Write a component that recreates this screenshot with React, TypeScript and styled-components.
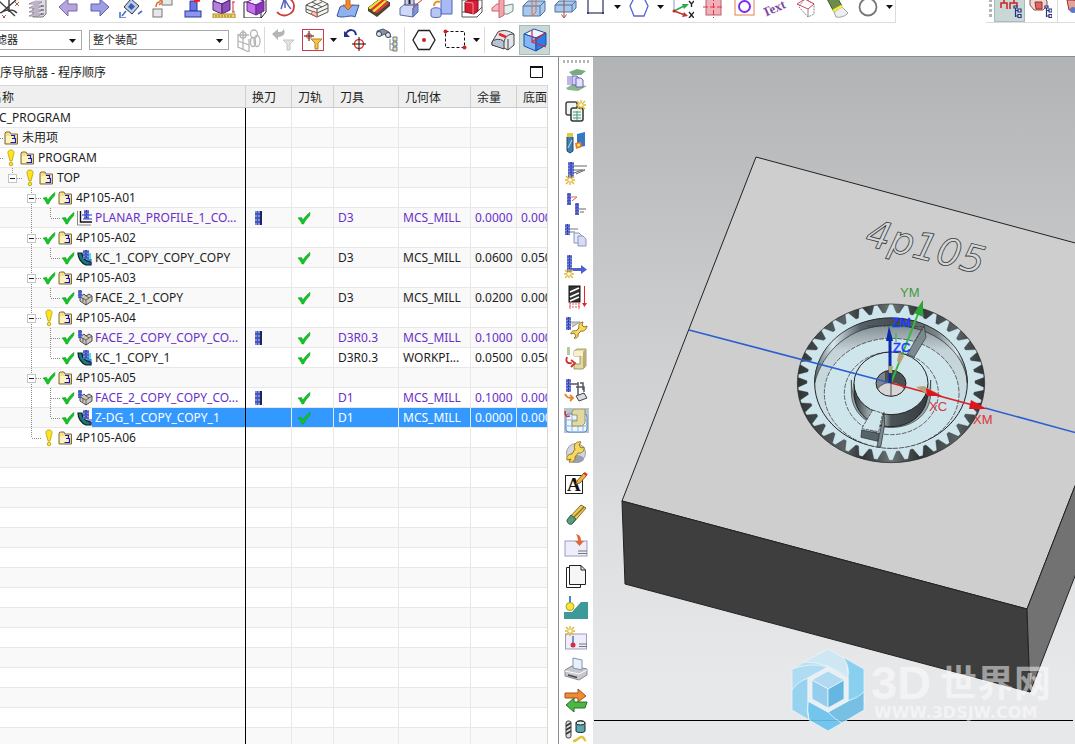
import React from "react";
import styled, { createGlobalStyle, css } from "styled-components";

const Global = createGlobalStyle`
  * { box-sizing: border-box; }
  html, body { margin: 0; padding: 0; background: #fff; overflow: hidden; }
  body { font-family: "Noto Sans", "Noto Sans CJK SC", sans-serif; font-size: 12px; color: #1e1e1e; }
  button, select { font-family: inherit; }
`;

/* ---------- layout ---------- */

const Shell = styled.div`
  display: flex;
  flex-direction: column;
  height: 100vh;
  overflow: hidden;
  background: #fff;
`;

const TopBar = styled.div`
  display: flex;
  gap: 90px;
  height: 23px;
  flex: none;
  overflow: hidden;
`;

const ToolStrip = styled.div<{ $grow?: boolean }>`
  display: flex;
  align-items: flex-end;
  overflow: hidden;
  border-bottom: 1px solid #dcdcdc;
  ${(p) =>
    p.$grow
      ? css`
          flex: 1 0 0;
          padding-left: 3px;
        `
      : css`
          border-right: 1px solid #dcdcdc;
          flex: none;
        `}
`;

const Scrolled = styled.div`
  display: flex;
  align-items: flex-end;
  margin-left: -9px;
`;

const ToolButton = styled.button<{ $active?: boolean; $w?: number; $h?: number }>`
  display: flex;
  flex: none;
  align-items: center;
  justify-content: center;
  width: ${(p) => p.$w ?? 31}px;
  height: ${(p) => p.$h ?? 32}px;
  padding: 0;
  border: 1px solid ${(p) => (p.$active ? "#a3bdbb" : "transparent")};
  background: ${(p) => (p.$active ? "#c9d8d7" : "transparent")};
`;

const DropButton = styled.button`
  display: flex;
  flex: none;
  align-items: center;
  justify-content: center;
  width: 12px;
  height: 30px;
  padding: 0;
  border: 0;
  background: transparent;
`;

const FilterBar = styled.div`
  display: flex;
  align-items: center;
  height: 34px;
  flex: none;
  overflow: hidden;
  border-bottom: 1px solid #868d94;
`;

const Combo = styled.div<{ $w: number }>`
  position: relative;
  display: flex;
  flex: none;
  width: ${(p) => p.$w}px;
  margin-right: 7px;
  svg { position: absolute; right: 6px; top: 9px; pointer-events: none; }
  select {
    width: 100%;
    height: 20px;
    padding: 0 18px 0 3px;
    appearance: none;
    border: 1px solid #a8a8a8;
    border-radius: 0;
    background: #fff;
    color: #1e1e1e;
    font-size: 11px;
  }
`;

const ComboClip = styled.div`
  display: flex;
  margin-left: -52px;
`;

const Divider = styled.span`
  flex: none;
  width: 1px;
  height: 26px;
  margin: 0 2px;
  background: #d9d9d9;
`;

const Grip = styled.span`
  flex: none;
  width: 3px;
  height: 20px;
  margin: 0 2px 3px 0;
  background: repeating-linear-gradient(#b4b4b4 0 3px, #fff 3px 5px);
`;

const Work = styled.div`
  display: flex;
  flex: 1;
  min-height: 0;
`;

const Navigator = styled.section`
  display: flex;
  flex-direction: column;
  flex: 0 0 52%;
  min-width: 0;
  padding-right: 10px;
  overflow: hidden;
  border-right: 1px solid #868d94;
`;

const TitleBar = styled.header`
  display: flex;
  align-items: center;
  justify-content: space-between;
  flex: none;
  height: 28px;
  padding: 2px 5px 0 0;
`;

const Title = styled.h1`
  margin: 0 0 0 -12px;
  font-size: 12px;
  font-weight: 400;
  white-space: nowrap;
`;

const WindowButton = styled.button`
  display: flex;
  padding: 0;
  border: 0;
  background: transparent;
`;

const TableFrame = styled.div`
  flex: 1;
  min-height: 0;
  overflow: hidden;
  border-top: 1px solid #d8d8d8;
  border-right: 1px solid #d8d8d8;
`;

const Table = styled.table`
  width: 100%;
  table-layout: fixed;
  border-collapse: separate;
  border-spacing: 0;
`;

const Head = styled.th`
  height: 22px;
  padding: 0 0 0 6px;
  overflow: hidden;
  border-right: 1px solid #cfcfcf;
  border-bottom: 1px solid #cacaca;
  background: #efefef;
  font-weight: 400;
  text-align: left;
  white-space: nowrap;
  &:first-child { padding: 0; }
  &:last-child { border-right: 0; }
`;

const HeadText = styled.span`
  display: block;
  margin-left: -10px;
`;

const Cell = styled.td`
  height: 20px;
  padding: 0 0 1px 4px;
  overflow: hidden;
  border-right: 1px solid #e8e8e8;
  box-shadow: inset 0 -1px #e8e8e8;
  line-height: 19px;
  white-space: nowrap;
  svg { display: block; }
  &:first-child { padding: 0 0 1px; border-right-color: #000; }
  &:last-child { border-right: 0; }
`;

const Row = styled.tr<{ $purple?: boolean; $selected?: boolean }>`
  color: ${(p) => (p.$selected ? "#fff" : p.$purple ? "#6a2fc8" : "#1e1e1e")};
  &:nth-child(even) { background: #f9f9f9; }
  ${(p) =>
    p.$selected &&
    css`
      ${Cell}:not(:first-child) { background: #3399ff; }
    `}
`;

const TreeLine = styled.div<{ $root?: boolean }>`
  display: flex;
  align-items: stretch;
  height: 19px;
  margin-left: ${(p) => (p.$root ? -13 : -14)}px;
`;

const Slot = styled.span<{ $w: number }>`
  flex: none;
  width: ${(p) => p.$w}px;
`;

const Label = styled.span<{ $selected?: boolean }>`
  flex: 1;
  padding-left: 3px;
  background: ${(p) => (p.$selected ? "#3399ff" : "transparent")};
`;

const CellIcon = styled.span<{ $pad: number }>`
  display: block;
  padding-left: ${(p) => p.$pad}px;
`;

const SideBar = styled.nav`
  display: flex;
  flex-direction: column;
  align-items: center;
  flex: 0 0 34px;
  overflow: hidden;
`;

const SideGrip = styled.span`
  flex: none;
  width: 27px;
  height: 3px;
  margin: 3px 0 1px;
  background: repeating-linear-gradient(90deg, #b4b4b4 0 2px, #fff 2px 4px);
`;

const SideItem = styled.button<{ $active?: boolean }>`
  display: flex;
  flex: none;
  align-items: center;
  justify-content: center;
  width: 25px;
  height: 25px;
  margin: 3px 0;
  padding: 0;
  border: 0;
  background: ${(p) => (p.$active ? "#b9c3cd" : "transparent")};
`;

const Viewport = styled.main`
  flex: 1;
  min-width: 0;
  overflow: hidden;
  background: linear-gradient(#b2b3b5 0%, #c9cacc 35%, #dddee0 68%, #e7e8ea 90%);
  svg { display: block; width: 100%; height: 100%; }
`;

/* ---------- small glyphs ---------- */

const Arrow = () => (
  <svg width="7" height="4" viewBox="0 0 7 4">
    <path d="M0 0H7L3.500 4Z" fill="#111" />
  </svg>
);

const Ico = ({ children, size = 24 }: { children: React.ReactNode; size?: number }) => (
  <svg width={size} height={size} viewBox="0 0 24 24" fill="none">
    {children}
  </svg>
);

const Mill = ({ x, y, w = 5, h = 13 }: { x: number; y: number; w?: number; h?: number }) => (
  <g>
    <rect x={x} y={y} width={w} height={h} fill="#5464cc" />
    <path
      d={`M${x + 1} ${y}v${h}M${x + w - 1} ${y}v${h}`}
      stroke="#a9b8f4"
      strokeWidth="1"
      strokeDasharray="1 2"
    />
    <path d={`M${x + w / 2} ${y}v${h}`} stroke="#2c3a96" strokeWidth="1" strokeDasharray="2 1" />
  </g>
);

const Spark = ({ x, y }: { x: number; y: number }) => (
  <g stroke="#e0b73a" strokeWidth="1.400">
    <path d={`M${x - 5} ${y}h10M${x} ${y - 5}v10M${x - 4} ${y - 4}l8 8M${x + 4} ${y - 4}l-8 8`} />
    <circle cx={x} cy={y} r="1.800" fill="#fffbe0" stroke="none" />
  </g>
);

const Wrench = ({ x = 0, y = 0 }: { x?: number; y?: number }) => (
  <g transform={`translate(${x} ${y})`}>
    <path
      d="M1 13C1 10 4 9 6 10L9 7C8 4 10 1 13 1L12 4L14 6L17 5C17 8 14 11 11 10L8 13C9 16 6 18 4 17L6 15L4 12Z"
      fill="#f7d75f"
      stroke="#96771d"
    />
  </g>
);

const Machine = ({ x = 0, y = 0 }: { x?: number; y?: number }) => (
  <g transform={`translate(${x} ${y})`}>
    <path d="M1 2L4 0H13V17L10 20H1V15H7V7H1Z" fill="#e2d8a0" stroke="#8c8558" strokeWidth=".8" />
    <path d="M10 3L13 0V17L10 20Z" fill="#b9ad70" />
    <path d="M1 2H10V7H1Z" fill="#f6f1c9" />
  </g>
);

const Cube = ({ x, y, fill, line, dark }: { x: number; y: number; fill: string; line: string; dark: string }) => (
  <g transform={`translate(${x} ${y})`} stroke={line} strokeWidth="1">
    <path d="M0 4L8 0L17 3L9 7Z" fill="#f4edff" />
    <path d="M0 4L9 7V17L0 13Z" fill={fill} />
    <path d="M9 7L17 3V13L9 17Z" fill={dark} />
  </g>
);

const TreeMark = ({ x, y }: { x: number; y: number }) => (
  <g transform={`translate(${x} ${y})`} stroke="#27337d" strokeWidth="1.200" fill="#e9ecff">
    <path d="M1.500 0V11M1.500 4.500H5M1.500 10H5" />
    <path d="M4 3h3v3H4zM4 8.500h3v3H4zM0 0h3v2H0z" />
  </g>
);

/* ---------- toolbar drawings ---------- */

const topIcons: Record<string, React.ReactNode> = {
  Trim: (
    <>
      <path d="M3 6L20 22M21 6L6 19M14 4V18M5 19C12 15 18 15 22 19" stroke="#3a3a3a" strokeWidth="1.400" />
      <path d="M20 8l4 4m0-4l-4 4M7 21l4 4m0-4l-4 4" stroke="#c0533f" />
    </>
  ),
  Layers: (
    <>
      <path d="M9 5H20V20L17 23H7V12" fill="#dedce3" stroke="#77747d" />
      <path d="M3 10L7 8H16L12 10ZM3 14L7 12H16L12 14ZM3 18L7 16H16L12 18ZM3 22L7 20H16L12 22Z" fill="#e6dcee" stroke="#85778f" strokeWidth=".8" />
      <path d="M15 12h3m-3 4h3m-3 4h3" stroke="#444" />
    </>
  ),
  Back: <path d="M2 13L11 5V10H20V17H11V22Z" fill="#b6a4dc" stroke="#7a68ad" />,
  Forward: <path d="M21 13L12 5V10H3V17H12V22Z" fill="#9c9fe4" stroke="#5f61ae" />,
  Rotate: (
    <>
      <path d="M12 5L20 12L13 20L5 13Z" fill="#b9cdf2" stroke="#333" />
      <path d="M12 9L16 12.500L12.500 16L9 13Z" fill="#3b5fa8" />
      <path d="M1 18V24H7M3 22L7 17M17 5L21 2M19 20L23 17" stroke="#4a73c8" strokeWidth="1.600" />
    </>
  ),
  Move: (
    <>
      <rect x="12" y="4" width="10" height="7" fill="#e8e8e8" stroke="#777" />
      <rect x="3" y="15" width="9" height="8" fill="#e8e8e8" stroke="#777" />
      <path d="M6 13C6 9 8 8 10 8M9 5L12 8L9 11" stroke="#e26a2c" strokeWidth="1.500" />
    </>
  ),
  Block: (
    <>
      <path d="M9 7H16V17H9Z" fill="#6a74e4" stroke="#2d3799" />
      <rect x="4" y="17" width="16" height="6" fill="#8b96f2" stroke="#2d3799" />
      <path d="M13 7L19 6" stroke="#e22" strokeWidth="3" />
    </>
  ),
  Measure: (
    <>
      <Cube x={1} y={3} fill="#b780da" dark="#8c4fb8" line="#4f2570" />
      <rect x="1" y="20" width="22" height="4" fill="#f2d674" stroke="#a98b2c" />
      <path d="M4 21v2m3-2v2m3-2v2m3-2v2m3-2v2m3-2v2" stroke="#8b7220" />
      <path d="M21 8v10m-1-10h3m-3 10h3" stroke="#c33" />
    </>
  ),
  Bounding: (
    <>
      <path d="M1 8V24H18L23 18V4M18 24V8H1" stroke="#222" />
      <Cube x={4} y={4} fill="#c672ec" dark="#8a36b8" line="#6a2691" />
    </>
  ),
  Curve: (
    <>
      <path d="M3 18C8 24 20 22 20 12C20 8 17 5 15 5" stroke="#cf3d3d" strokeWidth="1.800" />
      <path d="M7 15C9 9 10 6 11 3V14M11 6C13 9 14 12 17 15" stroke="#5b62c0" strokeWidth="1.500" />
    </>
  ),
  Mesh: (
    <>
      <path d="M1 11L13 5L23 10L12 15ZM1 11V18L12 23L23 18V10M12 15V23M7 8L17 13M6 13L17 8M1 15L12 19L23 14" fill="#f6f2ee" stroke="#555" />
      <path d="M6 20L12 23V19L8 17Z" fill="#f3c9bc" stroke="#b35b48" />
    </>
  ),
  Surface: (
    <>
      <path d="M4 13C8 10 10 14 14 12S20 12 23 11L19 23C14 20 8 25 1 22Z" fill="#8fb2f0" stroke="#36559c" />
      <path d="M10 4H14V11H17L12 16L7 11H10Z" fill="#ee8b33" stroke="#a75418" strokeWidth=".8" />
    </>
  ),
  Strip: (
    <>
      <path d="M1 14L14 4L23 9L10 20Z" fill="#d93a3a" stroke="#333" />
      <path d="M1 14L14 4L16 5L3 15.500ZM5 17L18 6L20 7L7 18.500Z" fill="#f7e22b" />
      <path d="M1 14V17L10 23L23 12V9L10 20Z" fill="#4a4533" />
    </>
  ),
  Extract: (
    <>
      <path d="M2 14L7 10H20L15 14V23L2 21Z" fill="#cfd9f5" stroke="#5a6ca8" />
      <path d="M15 14L20 10V18L15 23Z" fill="#7f93d6" stroke="#5a6ca8" />
      <rect x="7" y="3" width="9" height="8" fill="#c8cde8" stroke="#39477e" />
      <path d="M11.500 5V10" stroke="#222" strokeWidth="2" />
      <path d="M24 6L15 13" stroke="#d33" />
    </>
  ),
  Pattern: (
    <>
      <path d="M12 4H23V20H12Z" fill="#a9bbf4" stroke="#5265b4" />
      <path d="M2 16C2 13 12 13 12 16V22C12 24 2 24 2 22Z" fill="#b7c7f8" stroke="#5265b4" />
      <path d="M5 12C5 8 8 7 11 8" stroke="#e69a2c" strokeWidth="2" />
    </>
  ),
  Solid: (
    <>
      <path d="M2 6H22V18L17 23H2ZM2 18H17V6M17 18L22 13" stroke="#555" />
      <path d="M5 8L10 6H18V17L14 20L5 18Z" fill="#d41f35" stroke="#84101e" />
      <path d="M5 8L13 9V20" stroke="#ff8d99" />
    </>
  ),
  Split: (
    <>
      <path d="M1 14L6 10H12V17H1Z" fill="#f6b9c0" stroke="#c96673" />
      <path d="M12 12L22 10V17L17 20H12Z" fill="#e5f1ec" stroke="#70937f" />
      <path d="M8 6L13 4V21L8 24Z" fill="#f3a5ae" stroke="#c96673" />
    </>
  ),
  Section: (
    <>
      <path d="M1 12L6 7H23V17L18 22H1Z" fill="#a8c8ec" stroke="#50729e" />
      <path d="M1 12H18V22M18 12L23 7" stroke="#50729e" />
      <path d="M10 6L14 4V18L10 22Z" stroke="#dd7044" />
    </>
  ),
  Offset: (
    <>
      <path d="M2 11L6 7H23V14L19 18H2Z" fill="#a8c8ec" stroke="#50729e" />
      <path d="M2 11H19V18M19 11L23 7" stroke="#50729e" />
      <path d="M11 5V23M8.500 20.500L11 24L13.500 20.500" stroke="#a4553b" />
    </>
  ),
};

const lateIcons: Record<string, React.ReactNode> = {
  Axes: (
    <>
      <path d="M4 3V17" stroke="#8c93d6" />
      <path d="M4 17L14 12" stroke="#2ca84a" strokeWidth="1.500" />
      <path d="M12 10L19 10L14 15Z" fill="#2ca84a" />
      <path d="M4 17L15 21" stroke="#c0392b" strokeWidth="1.500" />
      <path d="M14 18L18 22L12 23Z" fill="#c0392b" />
      <circle cx="4" cy="17" r="1.500" fill="#c22" />
      <path d="M19 7L21.500 10L24 7M21.500 10V13M19 18L24 24M24 18L19 24" stroke="#222" strokeWidth="1.400" />
    </>
  ),
  Hatch: (
    <>
      <rect x="5" y="4" width="15" height="17" fill="#efb0bb" stroke="#b5606e" />
      <path d="M12.500 2V24M2 13H23" stroke="#e33" strokeDasharray="5 2" />
    </>
  ),
  Circle: (
    <>
      <rect x="3" y="3" width="19" height="18" stroke="#e4814a" />
      <circle cx="12.500" cy="12.500" r="5.500" stroke="#7b2df0" strokeWidth="2" />
    </>
  ),
  Text: (
    <text x="1" y="23" fontFamily="Liberation Serif" fontSize="13" fontWeight="700" fill="#7d4a9e" transform="rotate(-24 2 22)">
      Text
    </text>
  ),
  Draft: (
    <>
      <path d="M5 12L11 5L20 10V20L14 23L5 13Z" stroke="#888" strokeDasharray="2 1" />
      <path d="M3 10L14 15L20 10M3 10L11 5L20 10" stroke="#d46" />
      <path d="M14 15V23" stroke="#888" />
    </>
  ),
  Light: (
    <>
      <path d="M1 3H12L17 12L9 18Z" fill="#6d8b4b" stroke="#43562d" />
      <path d="M9 18L17 13L23 19C21 22 15 24 11 23Z" fill="#eceef0" stroke="#9ea2a6" />
      <path d="M8 17L17 12" stroke="#f3e648" strokeWidth="3" />
    </>
  ),
  Ring: <circle cx="12" cy="13" r="8.500" stroke="#777" strokeWidth="1.800" />,
};

const filterIcons: Record<string, React.ReactNode> = {
  chain: (
    <g stroke="#b4b4b4" strokeWidth="1.300">
      <path d="M1 6V19L12 24V17L1 13M12 17V11M6 2V22M1 7H12" />
      <circle cx="6" cy="7" r="3" />
      <ellipse cx="17" cy="6" rx="3.500" ry="4" />
      <ellipse cx="20" cy="13" rx="3" ry="5.500" />
      <ellipse cx="16" cy="14" rx="2.500" ry="4.500" />
    </g>
  ),
  undoFilter: (
    <>
      <path d="M1 6L7 1V4C12 4 13 2 12 0C16 5 12 9 7 9V12Z" fill="#b5b5b5" />
      <path d="M12 12H23L19 16V22H16V16Z" fill="#e3e3e3" stroke="#c4c4c4" />
    </>
  ),
  pickFilter: (
    <>
      <rect x="1.500" y="1.500" width="21" height="21" stroke="#cc3d4b" />
      <path d="M8 3V13M3 8H13" stroke="#111" />
      <circle cx="8" cy="8" r="2.500" stroke="#d33" />
      <path d="M10 11H21L17 15V21H14V15Z" fill="#f7c64c" stroke="#b98213" />
    </>
  ),
  target: (
    <>
      <path d="M2 7C6 0 12 1 13 7" stroke="#27307c" strokeWidth="2" />
      <path d="M1 3V9H7Z" fill="#27307c" />
      <circle cx="16" cy="16" r="4.500" stroke="#e33" strokeWidth="1.500" />
      <path d="M16 9V23M9 16H23" stroke="#111" />
    </>
  ),
  find: (
    <>
      <path d="M2 3L8 1L14 4L16 9L12 9L10 6L5 8L2 6Z" fill="#8492a8" stroke="#4b5664" />
      <circle cx="4" cy="6" r="2.500" fill="#dfe6ef" stroke="#39434f" />
      <circle cx="13" cy="7" r="2.500" fill="#dfe6ef" stroke="#39434f" />
      <path d="M15 11V22H18M15 16H18" stroke="#888" />
      <path d="M18 9h4v4h-4zM18 14h4v4h-4zM18 19h4v4h-4z" fill="#f4e67a" stroke="#3b5bb0" strokeWidth=".8" />
    </>
  ),
  hex: (
    <>
      <path d="M6.500 2.500H17.500L23 12L17.500 21.500H6.500L1 12Z" stroke="#222" strokeWidth="1.300" />
      <circle cx="12" cy="12" r="2" fill="#c22" />
    </>
  ),
  marquee: (
    <>
      <rect x="2.500" y="3.500" width="19" height="16" stroke="#111" strokeDasharray="3 2" />
      <circle cx="2.500" cy="3.500" r="2" fill="#c22" />
      <circle cx="21.500" cy="19.500" r="2" fill="#c22" />
    </>
  ),
  hood: (
    <>
      <path d="M7 4C12 1 19 3 23 6V17L17 22L13 20L1 17V14Z" fill="#e3e5ea" stroke="#444" />
      <path d="M1 14C4 10 12 11 13 14V21L1 17Z" fill="#b9c3d6" stroke="#444" />
      <path d="M13 14C14 9 17 6 23 6M17 22V11" stroke="#444" />
      <path d="M8 6L15 9" stroke="#e22" strokeWidth="2.500" />
    </>
  ),
  shaded: (
    <>
      <path d="M1 6L11 1L23 5L13 10Z" fill="#eef5ff" stroke="#1d4da8" />
      <path d="M1 6L13 10V23L1 18Z" fill="#7fb8f8" stroke="#1d4da8" />
      <path d="M13 10L23 5V17L13 23Z" fill="#2b7de8" stroke="#1d4da8" />
      <path d="M9 2V14L23 19M9 14L22 5" stroke="#e0243a" strokeWidth="1.200" />
    </>
  ),
};

const sideIcons: [string, React.ReactNode][] = [
  ["Program", <><path d="M5 4L13 1L22 3L17 7L8 7Z" fill="#79a97e" /><path d="M2 20L9 16L23 18L14 23L4 22Z" fill="#8ab98d" /><path d="M4 8V17M6 8V17" stroke="#7c6bd0" /><path d="M8 8H13L15 10V17H8Z" fill="#cfd0f6" stroke="#6b62b8" /><path d="M12 10H17L19 12V19H12Z" fill="#e3e4fc" stroke="#6b62b8" /></>],
  ["Create geometry", <><rect x="2" y="3" width="11" height="13" rx="2" fill="#f3f3f3" stroke="#444" strokeWidth="1.500" /><rect x="7" y="9" width="12" height="13" rx="2" fill="#eef8f2" stroke="#333" strokeWidth="1.500" /><path d="M9 13h8m-8 3h8m-8 3h8M13 12v9" stroke="#4c9a80" /><Spark x={17} y={6} /></>],
  ["Create tool", <><path d="M3 7L6 5L9 7V21L6 23L3 21Z" fill="#3e7fae" stroke="#1f4a6b" /><path d="M4 18L8 10" stroke="#bfe2f6" /><rect x="3" y="3" width="6" height="4" fill="#e6c93b" /><path d="M13 4L21 2V16L13 18Z" fill="#3678c4" /><path d="M11 13L17 12L18 17L12 19Z" fill="#ee7a2c" /><circle cx="14.500" cy="15" r="1.500" fill="#fff04f" /></>],
  ["Create operation", <><Mill x={4} y={1} w={6} h={16} /><path d="M10 5H23M10 9H21L12 13M10 12L18 9" stroke="#666" /><Spark x={6} y={19} /></>],
  ["Cut levels", <><Mill x={3} y={1} w={4} h={12} /><Mill x={11} y={11} w={4} h={12} /><path d="M7 5H13L8 9" stroke="#d66" /><path d="M15 17H22M16 20H20" stroke="#666" /></>],
  ["Copy operation", <><Mill x={1} y={1} w={5} h={11} /><path d="M6 6H14M6 9H11" stroke="#777" /><path d="M10 10H15L18 13V20H10Z" fill="#e6e9f8" stroke="#8c94bf" /><path d="M14 13H19L22 16V23H14Z" fill="#d7dcf3" stroke="#8c94bf" /></>],
  ["Transform", <><Mill x={3} y={1} w={5} h={17} /><path d="M8 14H17V11L23 15.500L17 20V17H8Z" fill="#4d5fd1" /><Spark x={5} y={20} /></>],
  ["Tool path depth", <><rect x="5" y="1" width="11" height="16" fill="#333" stroke="#111" /><path d="M6 7L15 3M6 12L15 8M6 16L15 12" stroke="#fff" strokeWidth="1.800" /><path d="M5 19H16M5 22H16M6 17V24M15 17V24" stroke="#e55" strokeDasharray="2 1" /><path d="M20.500 1V20" stroke="#e22" /><path d="M18 18H23L20.500 22Z" fill="#e22" /></>],
  ["Edit operation", <><Mill x={2} y={1} w={5} h={13} /><path d="M7 6H16L8 11" stroke="#999" fill="#ccc" /><Wrench x={6} y={5} /></>],
  ["Machine code", <><Machine x={9} y={2} /><rect x="3" y="0" width="3" height="8" fill="#b8c9a2" /><path d="M3 10C1 15 4 17 8 16M7 13L11 16L7 20" stroke="#cc3333" strokeWidth="1.800" /></>],
  ["Simulate", <><Mill x={2} y={1} w={5} h={13} /><path d="M7 6H14M14 4V19H22M12 9H20V14M16 5H19V12" stroke="#556" strokeWidth="1.500" /><path d="M12 18L20 15L23 20L15 23Z" fill="#d7dbe4" stroke="#444" /><path d="M1 16C3 20 5 20 8 20M6 17L9 20L6 23" stroke="#e6872a" strokeWidth="1.800" /></>],
  ["Post process", <><rect x="2" y="5" width="21" height="18" rx="3" fill="#eef6ff" stroke="#4a86c8" /><path d="M3 11H22M3 17H22M8 6V22M14 6V22M19 6V22" stroke="#8ab6e4" /><path d="M8 2L11 0H21V14L18 17H8V12H13V6H8Z" fill="#e2d8a0" stroke="#8c8558" strokeWidth=".8" /><path d="M1 2C1 8 3 8 6 7" stroke="#c33" strokeWidth="1.500" /></>],
  ["Machine setup", <><circle cx="12" cy="13" r="9.500" fill="#d3d8dc" stroke="#9a9ea3" /><ellipse cx="12" cy="19" rx="8" ry="4" fill="#9aa0a7" /><path d="M3 20C2 16 5 14 8 14L11 9C9 5 12 1 17 2L15 5L17 8L20 7C21 11 17 14 14 13L11 17C12 20 8 23 5 22L7 19Z" fill="#f7d75f" stroke="#96771d" /></>],
  ["Annotation", <><rect x="1.500" y="4.500" width="17" height="18" fill="#fff" stroke="#222" /><text x="3" y="20" fontFamily="Liberation Serif" fontSize="19" fontWeight="700" fill="#111">A</text><path d="M13 10L20 2L23 4L16 12L12 13Z" fill="#f0b545" stroke="#925e17" /><path d="M20 2L23 4" stroke="#d33" strokeWidth="2.500" /></>],
  ["Edit display", <><path d="M4 17L17 3L22 6L9 21Z" fill="#f0ce58" stroke="#826322" /><path d="M7 18L20 5" stroke="#8a7430" strokeWidth="1.500" /><path d="M3 18L7 13L12 17L8 22C5 23 3 21 3 18Z" fill="#5a9d7b" stroke="#2f5c46" /></>],
  ["Sheet", <><rect x="1" y="8" width="22" height="15" fill="#eeeefa" stroke="#9c9cc4" /><path d="M14 18H23M14 20.500H23" stroke="#777" /><path d="M12 1C16 2 17 4 17 8H20L15.500 13L11 8H14C14 5 13 3 12 1Z" fill="#e2683a" /></>],
  ["Pages", <><path d="M5 3.500H2.500V23.500H16.500V21" stroke="#222" /><path d="M5.500 1.500H17L21.500 6V20.500H5.500Z" fill="#f6f6f6" stroke="#222" /><path d="M17 1.500V6H21.500" stroke="#222" /></>],
  ["Probe", <><path d="M0 24V17H8L17 7H24V24Z" fill="#3d9a99" /><path d="M6 1V9" stroke="#3c8ad0" strokeWidth="2" /><circle cx="6" cy="11.500" r="4" fill="#f6e93b" stroke="#b59c1c" /></>],
  ["New sheet", <><rect x="1.500" y="8" width="21" height="15" fill="#eeeefa" stroke="#9c9cc4" /><path d="M15 18H23M15 20.500H23" stroke="#777" /><path d="M9 10V18" stroke="#4b74cf" strokeWidth="1.500" /><circle cx="9" cy="19" r="2.500" fill="#d82a3c" /><Spark x={6} y={5} /></>],
  ["Print", <><path d="M1 13L8 9L23 12V18L15 23L1 19Z" fill="#c5c8cc" stroke="#85898e" /><path d="M9 1L18 3L18 13L9 11Z" fill="#e6f1fb" stroke="#8595a8" /><path d="M1 14L15 17L23 13" stroke="#fff" /><path d="M4 18L13 20.500" stroke="#444" strokeWidth="1.500" /></>],
  ["Swap", <><path d="M1 5H14V1L22 8L14 14V10H1Z" fill="#f08a35" stroke="#a4531a" /><path d="M23 14H10V10L2 17L10 24V20H21Z" fill="#4bb748" stroke="#237525" /></>],
  ["Tool library", <><rect x="2" y="2" width="5" height="17" rx="2" fill="#ddd" stroke="#444" /><path d="M2 7L7 4M2 11L7 8M2 15L7 12" stroke="#333" strokeWidth="1.500" /><path d="M12 4C12 1 21 1 21 4V12C21 14 12 14 12 12Z" fill="#59a7b0" stroke="#222" /><ellipse cx="16.500" cy="4" rx="4.500" ry="2" fill="#d8eff2" stroke="#222" /><path d="M9 22C14 22 15 17 18 18S20 22 22 21" stroke="#e0c23c" strokeWidth="2.500" /></>],
];

/* ---------- tree glyphs ---------- */

const Check = () => (
  <svg width="14" height="19" viewBox="0 0 14 19">
    <path d="M1 10L4.500 9.500L6 12C8 9 10 6.500 13 4.500L12.500 8C10 10 8 13 6.500 16L5 16C4 13.500 2.500 11.500 1 10Z" fill="#12c626" stroke="#0b9c1c" strokeWidth=".6" />
  </svg>
);

const Bang = () => (
  <svg width="14" height="19" viewBox="0 0 14 19">
    <path d="M7 2C10.500 2 10.500 5 9.500 7L8 13H6L4.500 7C3.500 5 3.500 2 7 2Z" fill="#ffe61c" stroke="#b39a12" strokeWidth=".8" />
    <circle cx="7" cy="16" r="1.800" fill="#ffe61c" stroke="#b39a12" strokeWidth=".8" />
  </svg>
);

const Folder = () => (
  <svg width="15" height="19" viewBox="0 0 15 19">
    <path d="M1 16V5L2 4H6L7 6H13.500V16Z" fill="#f8e08a" stroke="#7a6b3c" />
    <path d="M2 8H12V15H2Z" fill="#fdf3bd" />
    <path d="M7 7.500H10.500V10.500H8M10.500 10.500H11.500V14.500H6.500" stroke="#1419d8" strokeWidth="1.200" fill="none" />
  </svg>
);

const PlanarOp = () => (
  <svg width="16" height="19" viewBox="0 0 16 19" fill="none">
    <path d="M.5 3V17H14" stroke="#888" />
    <path d="M3.500 3V14H15" stroke="#111" strokeWidth="1.400" />
    <path d="M5 7H15M6 11H15" stroke="#2a35d0" />
    <Mill x={7} y={2} w={5} h={9} />
  </svg>
);

const CavityOp = ({ pale }: { pale?: boolean }) => (
  <svg width="16" height="19" viewBox="0 0 16 19" fill="none">
    <path d="M1 5H14V17H9C4 15 1 10 1 5Z" fill={pale ? "#fff" : "#3ee4e6"} />
    <path d="M1 5H5C5 10 8 13 14 14V17H9C4 15 1 10 1 5Z" fill="#1a7a75" stroke="#0c1f1e" strokeWidth="1.200" />
    <path d="M10 12H15M11 15H15" stroke="#2a35d0" />
    <Mill x={6} y={2} w={6} h={9} />
  </svg>
);

const FaceOp = () => (
  <svg width="16" height="19" viewBox="0 0 16 19" fill="none">
    <path d="M3 9L7 6L9 8L12 6L15 8V13L9 17L3 13Z" fill="#cbc6be" stroke="#4d4a46" />
    <path d="M3 9L9 12L15 8M9 12V17M6 10V14M9 8L12 10" stroke="#4d4a46" strokeWidth=".8" />
    <Mill x={1} y={2} w={4} h={8} />
  </svg>
);

const ToolChange = () => (
  <svg width="9" height="19" viewBox="0 0 9 19">
    <rect x="1" y="3" width="7" height="14" fill="#4657b8" />
    <path d="M2 3V17M5 3V17" stroke="#b9c8ff" strokeDasharray="2 2" />
    <path d="M7 3V17" stroke="#1c2560" strokeWidth="2" />
  </svg>
);

/* Dotted connector: "pass" runs through, "tee" branches, "end" stops at the branch, "box" holds a collapse sign. */
type GuideKind = "pass" | "tee" | "end" | "box" | "boxEnd" | "stub" | "none";

const GuideSvg = styled.svg`
  flex: none;
`;

const Guide = ({ kind, w = 18 }: { kind: GuideKind; w?: number }) => {
  const boxed = kind === "box" || kind === "boxEnd";
  return (
    <GuideSvg width={w} height="20" viewBox={`0 0 ${w} 20`} fill="none">
      <g stroke="#8a8a8a" strokeDasharray="1 1">
        {(kind === "pass" || kind === "tee" || kind === "box") && <path d="M7.500 0V20" />}
        {(kind === "end" || kind === "boxEnd") && <path d="M7.500 0V10" />}
        {(kind === "tee" || kind === "end" || kind === "stub" || boxed) && <path d="M8 10.500H17" />}
      </g>
      {boxed && (
        <>
          <rect x="3.500" y="6.500" width="8" height="8" fill="#fff" stroke="#c4c4c4" />
          <path d="M5 10.500H10" stroke="#222" />
        </>
      )}
    </GuideSvg>
  );
};

/* ---------- data ---------- */

type Op = "planar" | "cavity" | "cavityPale" | "face";
interface Node {
  label: string;
  depth: number;
  guides: GuideKind[];
  status?: "ok" | "warn";
  op?: Op;
  change?: boolean;
  purple?: boolean;
  selected?: boolean;
  cells?: [string, string, string, string];
}

const nodes: Node[] = [
  { label: "NC_PROGRAM", depth: 0, guides: [] },
  { label: "未用项", depth: 1, guides: ["stub"] },
  { label: "PROGRAM", depth: 1, guides: ["stub"], status: "warn" },
  { label: "TOP", depth: 2, guides: ["none", "boxEnd"], status: "warn" },
  { label: "4P105-A01", depth: 3, guides: ["none", "none", "box"], status: "ok" },
  { label: "PLANAR_PROFILE_1_CO...", depth: 4, guides: ["none", "none", "pass", "end"], status: "ok", op: "planar", change: true, purple: true, cells: ["D3", "MCS_MILL", "0.0000", "0.0000"] },
  { label: "4P105-A02", depth: 3, guides: ["none", "none", "box"], status: "ok" },
  { label: "KC_1_COPY_COPY_COPY", depth: 4, guides: ["none", "none", "pass", "end"], status: "ok", op: "cavity", cells: ["D3", "MCS_MILL", "0.0600", "0.0500"] },
  { label: "4P105-A03", depth: 3, guides: ["none", "none", "box"], status: "ok" },
  { label: "FACE_2_1_COPY", depth: 4, guides: ["none", "none", "pass", "end"], status: "ok", op: "face", cells: ["D3", "MCS_MILL", "0.0200", "0.0000"] },
  { label: "4P105-A04", depth: 3, guides: ["none", "none", "box"], status: "warn" },
  { label: "FACE_2_COPY_COPY_CO...", depth: 4, guides: ["none", "none", "pass", "tee"], status: "ok", op: "face", change: true, purple: true, cells: ["D3R0.3", "MCS_MILL", "0.1000", "0.0000"] },
  { label: "KC_1_COPY_1", depth: 4, guides: ["none", "none", "pass", "end"], status: "ok", op: "cavity", cells: ["D3R0.3", "WORKPI...", "0.0500", "0.0500"] },
  { label: "4P105-A05", depth: 3, guides: ["none", "none", "box"], status: "ok" },
  { label: "FACE_2_COPY_COPY_CO...", depth: 4, guides: ["none", "none", "pass", "tee"], status: "ok", op: "face", change: true, purple: true, cells: ["D1", "MCS_MILL", "0.1000", "0.0000"] },
  { label: "Z-DG_1_COPY_COPY_1", depth: 4, guides: ["none", "none", "pass", "end"], status: "ok", op: "cavityPale", selected: true, cells: ["D1", "MCS_MILL", "0.0000", "0.0000"] },
  { label: "4P105-A06", depth: 3, guides: ["none", "none", "end"], status: "warn" },
];

const opIcon = { planar: <PlanarOp />, cavity: <CavityOp />, cavityPale: <CavityOp pale />, face: <FaceOp /> };
const blankRows = Array.from({ length: 40 }, (_, i) => i);

const TreeRow = ({ n }: { n: Node }) => (
  <Row $purple={n.purple} $selected={n.selected}>
    <Cell>
      <TreeLine $root={n.depth === 0}>
        {n.guides.map((g, i) => (
          <Guide key={i} kind={g} w={i === n.guides.length - 1 ? 18 : 19} />
        ))}
        {n.status && <Slot $w={16}>{n.status === "ok" ? <Check /> : <Bang />}</Slot>}
        {n.depth > 0 && <Slot $w={15}>{n.op ? opIcon[n.op] : <Folder />}</Slot>}
        <Label $selected={n.selected}>{n.label}</Label>
      </TreeLine>
    </Cell>
    <Cell>{n.change && <CellIcon $pad={4}><ToolChange /></CellIcon>}</Cell>
    <Cell>{n.cells && <CellIcon $pad={1}><Check /></CellIcon>}</Cell>
    {[0, 1, 2, 3].map((i) => (
      <Cell key={i}>{n.cells?.[i]}</Cell>
    ))}
  </Row>
);

/* ---------- 3D scene ---------- */

const TEETH = 38;
const gearPath = (() => {
  const pts: string[] = [];
  const at = (a: number, rx: number, ry: number, dy: number) =>
    pts.push(`${(333 + rx * Math.cos(a)).toFixed(1)} ${(309 + dy + ry * Math.sin(a)).toFixed(1)}`);
  for (let i = 0; i < TEETH; i++) {
    const s = (2 * Math.PI) / TEETH;
    const a = i * s - Math.PI / 2;
    at(a - s * 0.4, 252, 208, -3);
    at(a - s * 0.12, 279, 234, -2);
    at(a + s * 0.12, 279, 234, -2);
    at(a + s * 0.4, 252, 208, -3);
  }
  return `M${pts.join("L")}Z`;
})();

const Scene = () => (
  <svg viewBox="593 57 482 687" preserveAspectRatio="xMinYMin slice">
    <defs>
      <linearGradient id="wall" x1="0" y1="0" x2="1" y2="0">
        <stop offset="0" stopColor="#5d686c" />
        <stop offset=".12" stopColor="#d9e9ee" />
        <stop offset=".3" stopColor="#56606a" />
        <stop offset=".55" stopColor="#444b4f" />
        <stop offset=".8" stopColor="#7b868b" />
        <stop offset=".93" stopColor="#dcebf0" />
        <stop offset="1" stopColor="#5d686c" />
      </linearGradient>
      <linearGradient id="wallSoft" x1="0" y1="0" x2="0" y2="1">
        <stop offset="0" stopColor="#6e797e" />
        <stop offset=".25" stopColor="#c4d3d8" />
        <stop offset="1" stopColor="#cfe4ea" />
      </linearGradient>
      <linearGradient id="boss" x1="0" y1="0" x2="1" y2="0">
        <stop offset="0" stopColor="#30383b" />
        <stop offset=".18" stopColor="#8d999e" />
        <stop offset=".35" stopColor="#d3e3e8" />
        <stop offset=".5" stopColor="#4c5559" />
        <stop offset="1" stopColor="#353c3f" />
      </linearGradient>
      <linearGradient id="rim" x1="0" y1="0" x2="1" y2="0">
        <stop offset="0" stopColor="#2e3436" />
        <stop offset=".25" stopColor="#5a6265" />
        <stop offset=".35" stopColor="#2f3335" />
        <stop offset=".5" stopColor="#6c7578" />
        <stop offset=".65" stopColor="#2f3335" />
        <stop offset=".85" stopColor="#5a6265" />
        <stop offset="1" stopColor="#2e3436" />
      </linearGradient>
      <clipPath id="hole"><ellipse cx="333" cy="310" rx="45" ry="39" /></clipPath>
    </defs>

    <g stroke="#222" strokeWidth="1">
      <path d="M756 157L1235 286L1075 486L1027 609L622 501Z" fill="#cecece" />
      <path d="M622 501L1027 609L1030 692L625 584Z" fill="#3e3e3e" />
      <path d="M1027 609L1075 486L1200 166L1200 263L1075 576L1030 692Z" fill="#727272" />
    </g>

    <text x="864" y="245" transform="rotate(14 864 245)" fontFamily="DejaVu Sans" fontStyle="italic" fontSize="38" fill="#d2d8da" stroke="#3a3a3a" strokeWidth=".8">
      4p105
    </text>

    <g transform="translate(780 280) scale(.33333)">
      <ellipse cx="333" cy="310" rx="281" ry="238" fill="url(#rim)" stroke="#222" strokeWidth="2" />
      <path d={gearPath} fill="#cfe5ec" stroke="#30383b" strokeWidth="1" />

      <ellipse cx="333" cy="309" rx="229" ry="195" fill="url(#wallSoft)" stroke="#222" strokeWidth="3" />
      <path d="M104 309C104 200 205 114 333 114S562 200 562 309C555 215 460 136 333 136S128 215 104 309Z" fill="url(#wall)" stroke="#222" strokeWidth="2" />
      <ellipse cx="335" cy="340" rx="202" ry="165" fill="#cfe5ec" stroke="#222" strokeWidth="2" strokeDasharray="14 4" />
      <ellipse cx="334" cy="340" rx="141" ry="124" fill="#cfe5ec" stroke="#222" strokeWidth="2" strokeDasharray="14 4" />
      <path d="M214 300C214 470 452 470 452 300V330C460 480 208 480 214 330Z" fill="#93a2a8" stroke="#333" strokeWidth="2" />
      <path d="M222 310V335C222 475 443 475 443 335V310Z" fill="url(#boss)" stroke="#222" strokeWidth="3" />
      <ellipse cx="333" cy="310" rx="111" ry="94" fill="#cfe5ec" stroke="#222" strokeWidth="3" />

      <g clipPath="url(#hole)">
        <rect x="280" y="265" width="110" height="90" fill="#4a5053" />
        <path d="M288 265H315V340H288Z" fill="#7d8588" />
        <ellipse cx="333" cy="342" rx="45" ry="35" fill="#d6d6d6" stroke="#222" strokeWidth="2" />
      </g>
      <ellipse cx="333" cy="310" rx="45" ry="39" fill="none" stroke="#222" strokeWidth="3" />

      <path d="M432 136L438 172L402 232L382 222Z" fill="#7b8a90" stroke="#333" strokeWidth="2" />
      <path d="M262 138L433 140L400 190" fill="none" stroke="#333" strokeWidth="2" strokeDasharray="8 4" />

      <path d="M278 390L308 400L296 455L245 446Z" fill="#cfe5ec" stroke="#222" strokeWidth="2" strokeDasharray="10 3" />
      <path d="M245 450L296 460L294 484L243 472Z" fill="#56646a" stroke="#222" strokeWidth="2" />
      <path d="M312 397L314 434L302 502L291 500Z" fill="#7b8a90" stroke="#222" strokeWidth="2" />
    </g>

    <path d="M689 330L891 383" stroke="#2b5fd0" strokeWidth="1.600" />
    <path d="M985 408L1077 433" stroke="#2b5fd0" strokeWidth="1.600" />

    <path d="M891 383L980 407" stroke="#dc1f26" strokeWidth="1.800" />
    <path d="M916 387L924 386L939 394L928 395Z" fill="#b6a277" />
    <path d="M926 388L942 396L927 396Z" fill="#e0141c" />
    <path d="M971 400L987 409L969 409Z" fill="#e0141c" />

    <path d="M891 383L918 314" stroke="#35b83f" strokeWidth="2" />
    <path d="M923 300L923 317L914 313Z" fill="#2da437" />
    <path d="M899 352L904 356L900 364L897 361Z" fill="#b6a277" />
    <path d="M888 327H906M896 333V342" stroke="#35b83f" strokeWidth="1.200" />

    <path d="M890 383V335" stroke="#0b2ba6" strokeWidth="3" />
    <path d="M889 326L893 341H886Z" fill="#0b2ba6" />
    <path d="M888 366H893L892 373H889Z" fill="#b6a277" />
    <path d="M891 374V396" stroke="#333" strokeWidth=".8" />

    <g fontFamily="Liberation Sans" fontSize="13">
      <text x="900" y="297" fill="#3e9a41">YM</text>
      <text x="892" y="327" fill="#1c3bff" stroke="#1c3bff" strokeWidth=".4">ZM</text>
      <text x="893" y="352" fill="#1c3bff" stroke="#1c3bff" strokeWidth=".4">ZC</text>
      <text x="929" y="411" fill="#d9363c">XC</text>
      <text x="973" y="424" fill="#d9363c">XM</text>
    </g>

    <path d="M594 720.500H1073" stroke="#000" />

    <g stroke="#eef5f9" strokeWidth=".8" opacity=".9">
      <path d="M792 669L828 649L843 658Q850 668 848 678L828 667Q810 664 792 669Z" fill="#b5def3" />
      <path d="M804 662L828 649L846 659L848 676L828 666Q816 662 804 662Z" fill="#cde7f5" />
      <path d="M843 657L864 669V705Q858 700 848 701V678Q850 666 843 657Z" fill="#7fcdf1" />
      <path d="M864 692V710L842 723Q828 722 812 713L828 712L848 701Q858 698 864 692Z" fill="#6dbbe4" />
      <path d="M842 723L828 731L809 720Q807 710 808 701L828 712Q834 719 842 723Z" fill="#66c3ef" />
      <path d="M809 720L792 710V685Q798 676 808 678V701Q806 711 809 720Z" fill="#8fd0f0" />
      <path d="M792 690V669Q810 662 828 667L808 678Q797 682 792 690Z" fill="#a9dbf3" />
      <path d="M828 667L848 678V701L828 712L808 701V678Z" fill="#eaf0f3" />
      <path d="M828 671L844 680L828 689L812 680Z" fill="#a9d9f2" />
      <path d="M812 680L828 689V708L812 699Z" fill="#8ccbee" />
      <path d="M844 680L828 689V708L844 699Z" fill="#57b2e2" />
    </g>
    <g fill="#fff" fillOpacity=".5">
      <text x="871" y="699" fontFamily="Liberation Sans" fontWeight="700" fontSize="47">3D</text>
      <text x="940" y="697" fontFamily="Noto Sans CJK SC" fontWeight="700" fontSize="37">世界网</text>
      <text x="874" y="718" fontFamily="DejaVu Sans" fontWeight="700" fontSize="16">WWW.3DSJW.COM</text>
    </g>
  </svg>
);

/* ---------- page ---------- */

const IconTool = ({ name, art, w, h, active, size }: { name: string; art: React.ReactNode; w?: number; h?: number; active?: boolean; size?: number }) => (
  <ToolButton type="button" aria-label={name} $w={w} $h={h} $active={active}>
    <Ico size={size}>{art}</Ico>
  </ToolButton>
);

const Drop = ({ name }: { name: string }) => (
  <DropButton type="button" aria-label={name}><Arrow /></DropButton>
);

export default function App() {
  return (
    <Shell>
      <Global />
      <TopBar>
        <ToolStrip>
          <Scrolled>
            {Object.entries(topIcons).map(([k, art]) => <IconTool key={k} name={k} art={art} />)}
            <IconTool name="Rectangle" art={<><rect x="4" y="5" width="15" height="14" stroke="#3c4274" strokeWidth="1.300" /><path d="M3 18h2v2H3zM18 18h2v2h-2z" fill="#3c4274" /></>} />
            <Drop name="Rectangle options" />
            <IconTool name="Polygon" art={<path d="M7 4H17L21 12L17 22H7L3 12Z" stroke="#5865cc" strokeWidth="1.300" />} />
            <Drop name="Polygon options" />
            {Object.entries(lateIcons).map(([k, art]) => <IconTool key={k} name={k} art={art} />)}
            <Drop name="More" />
          </Scrolled>
        </ToolStrip>
        <ToolStrip $grow>
          <Grip />
          <IconTool name="Program order view" active w={31} h={32} art={<><path d="M3 14V9H9V15M6 4V9M12 15V9H19V13M16 4V9" stroke="#c22" strokeWidth="1.500" /><TreeMark x={16} y={12} /></>} />
          <IconTool name="Machine tool view" w={30} art={<><path d="M2 6L6 4H16L19 7V12L15 16H6L2 11Z" fill="#ead9d4" stroke="#90504a" /><path d="M7 8H14V15H8Z" fill="#e2645c" stroke="#9a2c28" /><TreeMark x={17} y={12} /></>} />
          <Divider />
          <IconTool name="Geometry view" art={<><path d="M3 6H10L14 9V16H5Z" fill="#e3a39b" stroke="#9a2c28" /><circle cx="9" cy="16" r="3" fill="#5c78c9" /></>} />
        </ToolStrip>
      </TopBar>

      <FilterBar>
        <ComboClip>
          <Combo $w={134}>
            <select aria-label="选择过滤器"><option>无选择过滤器</option></select>
            <Arrow />
          </Combo>
        </ComboClip>
        <Combo $w={140}>
          <select aria-label="选择范围"><option>整个装配</option></select>
          <Arrow />
        </Combo>
        <IconTool name="Assembly constraint" w={26} art={filterIcons.chain} />
        <Divider />
        <IconTool name="Reset filter" w={32} art={filterIcons.undoFilter} />
        <IconTool name="Detail filter" w={28} art={filterIcons.pickFilter} />
        <Drop name="Filter options" />
        <IconTool name="Clear selection" w={32} art={filterIcons.target} />
        <IconTool name="Find in navigator" w={31} art={filterIcons.find} />
        <Divider />
        <IconTool name="Point" w={33} art={filterIcons.hex} />
        <IconTool name="Marquee" w={30} art={filterIcons.marquee} />
        <Drop name="Marquee options" />
        <Divider />
        <IconTool name="Hidden edges" w={32} art={filterIcons.hood} />
        <IconTool name="Shaded with edges" w={31} h={30} active art={filterIcons.shaded} />
      </FilterBar>

      <Work>
        <Navigator>
          <TitleBar>
            <Title>程序导航器 - 程序顺序</Title>
            <WindowButton type="button" aria-label="Maximize">
              <svg width="13" height="12" viewBox="0 0 13 12" fill="none">
                <path d="M.5 1V11.500H12.500V1" stroke="#111" />
                <path d="M0 1H13" stroke="#111" strokeWidth="2" />
              </svg>
            </WindowButton>
          </TitleBar>
          <TableFrame>
            <Table>
              <colgroup>
                <col width={246} />
                <col width={46} />
                <col width={42} />
                <col width={65} />
                <col width={72} />
                <col width={46} />
                <col />
              </colgroup>
              <thead>
                <tr>
                  <Head><HeadText>名称</HeadText></Head>
                  <Head>换刀</Head>
                  <Head>刀轨</Head>
                  <Head>刀具</Head>
                  <Head>几何体</Head>
                  <Head>余量</Head>
                  <Head>底面余量</Head>
                </tr>
              </thead>
              <tbody>
                {nodes.map((n, i) => <TreeRow key={i} n={n} />)}
                {blankRows.map((i) => (
                  <Row key={`b${i}`}>
                    <Cell /><Cell /><Cell /><Cell /><Cell /><Cell /><Cell />
                  </Row>
                ))}
              </tbody>
            </Table>
          </TableFrame>
        </Navigator>

        <SideBar>
          <SideGrip />
          {sideIcons.map(([name, art]) => (
            <SideItem key={name} type="button" aria-label={name} $active={name === "Post process"}>
              <Ico>{art}</Ico>
            </SideItem>
          ))}
        </SideBar>

        <Viewport>
          <Scene />
        </Viewport>
      </Work>
    </Shell>
  );
}
